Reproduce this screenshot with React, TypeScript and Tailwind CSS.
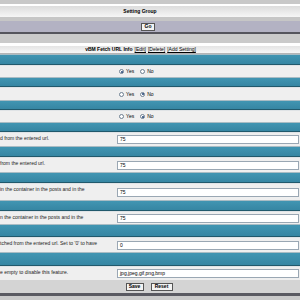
import React from "react";

interface IRow {
  desc: string;
  h: string;
  control: React.ReactNode;
}

const Radio: React.FC<{ checked?: boolean }> = ({ checked }) => (
  <span className="inline-flex items-center justify-center w-[5px] h-[5px] rounded-full border border-[#6d7f91] bg-white">
    {checked && <span className="w-[2px] h-[2px] rounded-full bg-[#1d3f73]" />}
  </span>
);

const YesNo: React.FC<{ yes: boolean }> = ({ yes }) => (
  <div className="flex items-center gap-[2px] pl-[4px]">
    <Radio checked={yes} />
    <span>Yes</span>
    <span className="w-[2px]" />
    <Radio checked={!yes} />
    <span>No</span>
  </div>
);

const TextBox: React.FC<{ value: string }> = ({ value }) => (
  <div className="ml-[2px] w-[182px] h-[9px] bg-white border border-[#9aa7b3] flex items-center pl-[2px]">
    {value}
  </div>
);

const Teal: React.FC<{ h: string }> = ({ h }) => (
  <div className={`${h} bg-linear-to-b from-[#4195b2] to-[#3686a3] border-t border-[#a9bcc4] border-b border-b-[#21596c]`} />
);

const rows: { teal: string; row: IRow }[] = [
  { teal: "h-[11px]", row: { desc: "", h: "h-[12px]", control: <YesNo yes={true} /> } },
  { teal: "h-[10px]", row: { desc: "", h: "h-[13px]", control: <YesNo yes={false} /> } },
  { teal: "h-[10px]", row: { desc: "", h: "h-[12px]", control: <YesNo yes={false} /> } },
  { teal: "h-[10px]", row: { desc: "d from the entered url.", h: "h-[14px]", control: <TextBox value="75" /> } },
  { teal: "h-[11px]", row: { desc: "from the entered url.", h: "h-[15px]", control: <TextBox value="75" /> } },
  { teal: "h-[11px]", row: { desc: "in the container in the posts and in the", h: "h-[17px]", control: <TextBox value="75" /> } },
  { teal: "h-[11px]", row: { desc: "n the container in the posts and in the", h: "h-[13px]", control: <TextBox value="75" /> } },
  { teal: "h-[13px]", row: { desc: "tched from the entered url. Set to '0' to have", h: "h-[15px]", control: <TextBox value="0" /> } },
  { teal: "h-[14px]", row: { desc: "e empty to disable this feature.", h: "h-[14px]", control: <TextBox value="jpg,jpeg,gif,png,bmp" /> } },
];

export default function App() {
  return (
    <div className="w-[300px] h-[300px] overflow-hidden bg-[#cacaca] font-['Liberation_Sans',Arial,sans-serif] text-[5px] leading-none text-black">
      <div className="h-[4px] bg-[#c8c8c8]" />
      <div className="h-[2px] bg-white" />
      <div className="h-[11px] bg-linear-to-b from-[#dcdcdc] to-[#f6f6f6] flex items-center justify-center pr-[20px] font-bold">
        Setting Group
      </div>
      <div className="h-[4px] bg-[#c6c6c6]" />
      <div className="h-[11px] bg-[#b3b2c3] flex items-center justify-center pl-[-4px] pr-[4px] -mt-[0px]">
        <span className="h-[8px] px-[3px] flex items-center bg-[#f3f3f3] border border-[#555] font-bold">Go</span>
      </div>
      <div className="h-[2px] bg-[#55555d]" />
      <div className="h-[9px] bg-[#cacaca]" />
      <div className="h-[3px] bg-white" />
      <div className="h-[8px] bg-linear-to-b from-[#e4e4e4] to-[#f7f7f7] flex items-center justify-center pr-[19px] border-b border-[#b5b5b5]">
        <span className="font-bold">vBM Fetch URL Info</span>
        <span className="ml-[2px] underline">[Edit]</span>
        <span className="ml-[2px] underline">[Delete]</span>
        <span className="ml-[2px] underline">[Add Setting]</span>
      </div>
      {rows.map((r, i) => (
        <div key={i}>
          <Teal h={r.teal} />
          <div className={`${r.row.h} grid grid-cols-[115px_1fr] bg-[#efefef] border-t border-[#dfe3e6]`}>
            <div className="flex items-start pt-[3px] whitespace-nowrap overflow-hidden text-[#222]">{r.row.desc}</div>
            <div className="flex items-center">{r.row.control}</div>
          </div>
        </div>
      ))}
      <div className="h-[13px] bg-[#d4d4d4] flex items-center justify-center gap-[7px] pr-[2px]">
        <span className="h-[8px] w-[18px] flex items-center justify-center bg-[#f3f3f3] border border-[#555] font-bold">Save</span>
        <span className="h-[8px] w-[22px] flex items-center justify-center bg-[#f3f3f3] border border-[#555] font-bold">Reset</span>
      </div>
      <div className="h-[3px] bg-[#5a5a62]" />
      <div className="h-[10px] bg-[#cacaca]" />
    </div>
  );
}
